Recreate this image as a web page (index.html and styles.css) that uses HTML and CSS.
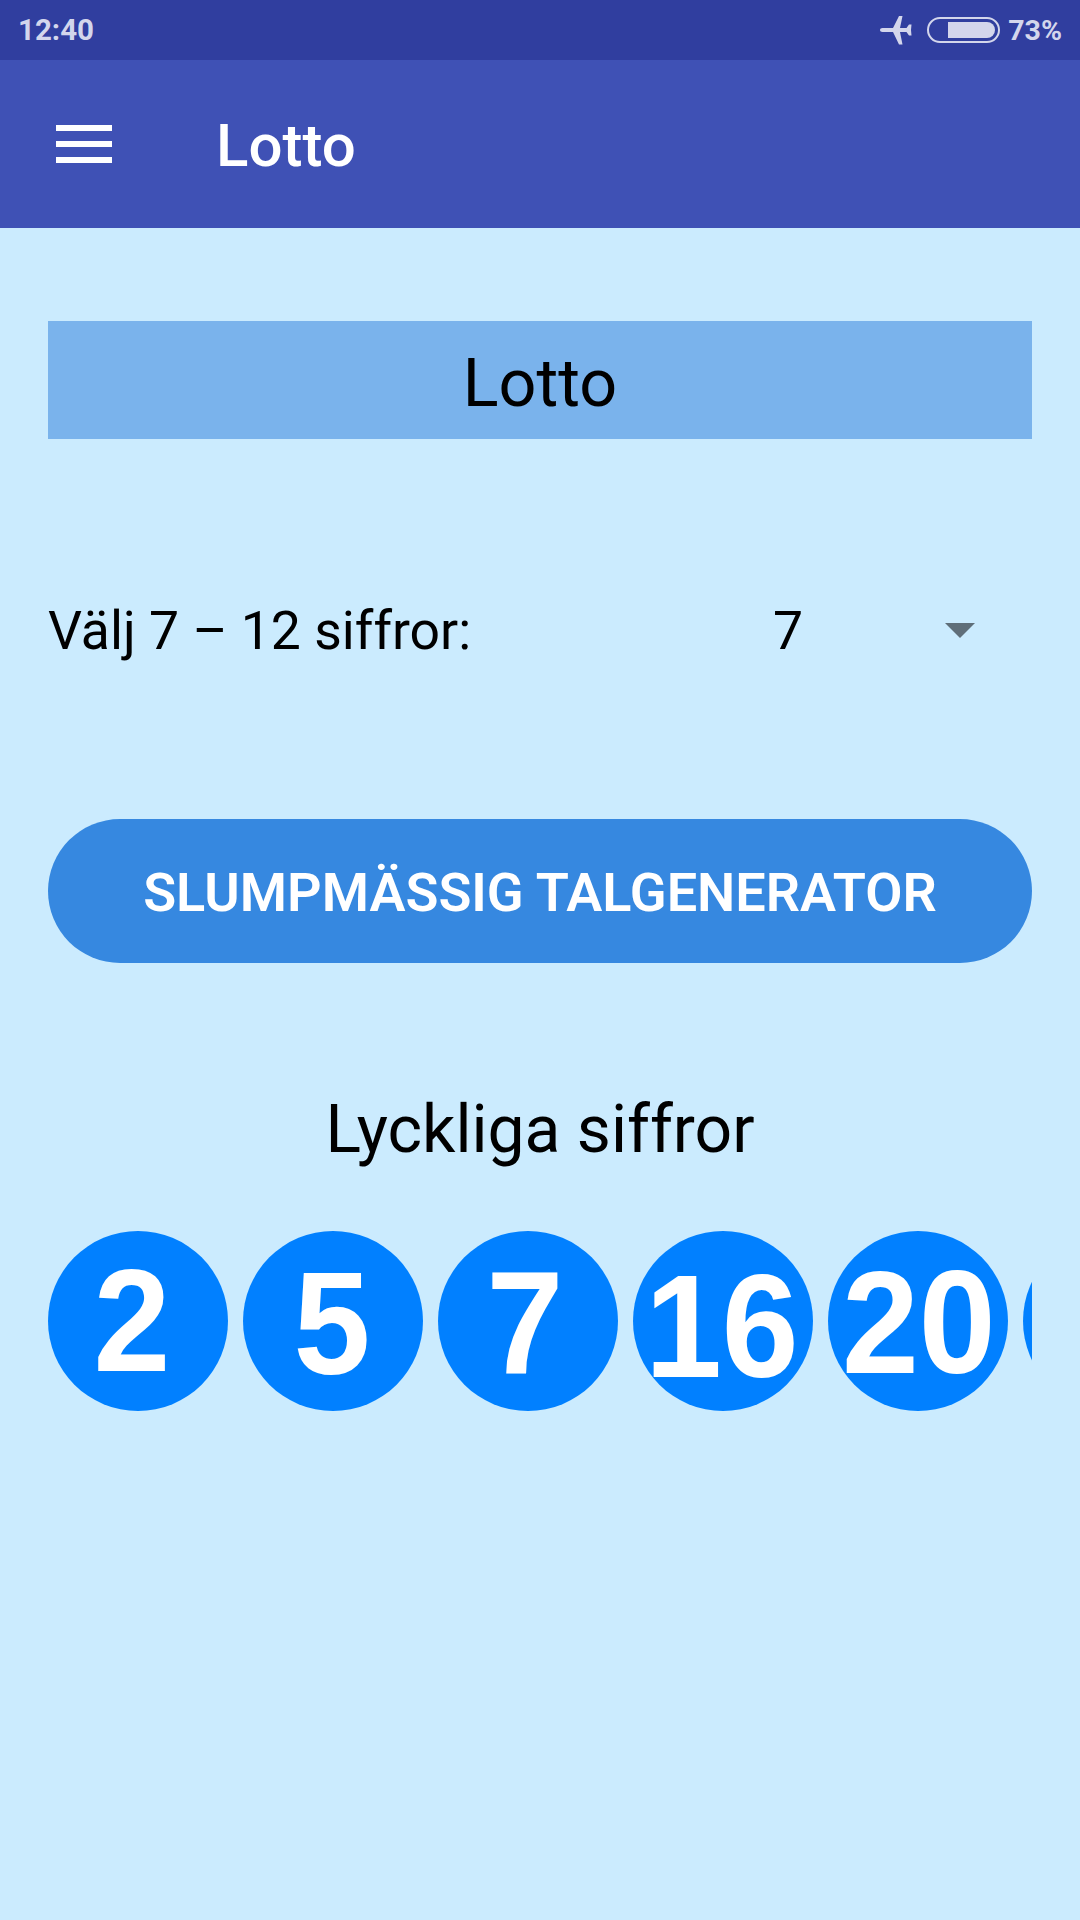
FILE: index.html
```html
<!DOCTYPE html>
<html lang="sv">
<head>
    <meta charset="UTF-8">
    <meta name="viewport" content="width=device-width, initial-scale=1.0">
    <title>Lotto</title>
    <link rel="stylesheet" href="styles.css">
</head>
<body>
    <div class="status-bar">
        <span class="status-text">12:40</span>
        <div class="status-icons">
            <svg class="plane" width="34" height="30" viewBox="0 0 34 30">
                <path d="M1 15c0-1.300 1-2 2.500-2H14L20 1h3.500L21 13h6.500l2.500-3.500h2.500L32 15l.5 5.500H30L27.500 17H21l2.500 12.500H20L14 17H3.500C2 17 1 16.300 1 15z"/>
            </svg>
            <div class="battery">
                <div class="battery-fill"></div>
            </div>
            <span class="status-text status-percent">73%</span>
        </div>
    </div>

    <div class="toolbar">
        <div class="menu-icon">
            <span></span>
            <span></span>
            <span></span>
        </div>
        <div class="toolbar-title">Lotto</div>
    </div>

    <div class="content">
        <h1 class="page-title">Lotto</h1>

        <div class="picker-row">
            <span class="picker-label">Välj 7 – 12 siffror:</span>
            <div class="picker">
                <span>7</span>
                <div class="picker-arrow"></div>
            </div>
        </div>

        <button type="button" class="generate-button">SLUMPMÄSSIG TALGENERATOR</button>

        <h2 class="lucky-title">Lyckliga siffror</h2>

        <div class="balls">
            <div class="ball ball-two"><span>2</span></div>
            <div class="ball ball-five"><span>5</span></div>
            <div class="ball ball-seven"><span>7</span></div>
            <div class="ball ball-sixteen"><span>16</span></div>
            <div class="ball ball-twenty"><span>20</span></div>
            <div class="ball"></div>
        </div>
    </div>
</body>
</html>
```

FILE: styles.css
```css
* {
    margin: 0;
    padding: 0;
    box-sizing: border-box;
}

body {
    width: 1080px;
    height: 1920px;
    overflow: hidden;
    font-family: Roboto, sans-serif;
    background-color: #cbebfe;
    color: #000;
}

.status-bar {
    height: 60px;
    padding: 0 18px 0 18px;
    display: flex;
    align-items: center;
    justify-content: space-between;
    background-color: #303e9f;
}

.status-text {
    font-size: 29.5px;
    font-weight: 700;
    color: #d3d6ec;
}

.status-percent {
    font-size: 28.5px;
}

.status-icons {
    display: flex;
    align-items: center;
}

.plane {
    fill: #d3d6ec;
    margin-right: 14px;
}

.battery {
    width: 73px;
    height: 26px;
    margin-right: 8px;
    padding: 3px;
    display: flex;
    justify-content: flex-end;
    border: 2px solid #d3d6ec;
    border-radius: 13px;
}

.battery-fill {
    width: 47px;
    background-color: #d3d6ec;
    border-radius: 0 9px 9px 0;
}

.toolbar {
    height: 168px;
    padding-left: 56px;
    display: flex;
    align-items: center;
    background-color: #3f51b5;
}

.menu-icon {
    width: 56px;
    margin-right: 104px;
    display: flex;
    flex-direction: column;
    gap: 10px;
}

.menu-icon span {
    height: 6px;
    background-color: #fff;
}

.toolbar-title {
    padding-top: 3px;
    font-size: 60px;
    font-weight: 500;
    color: #fff;
}

.content {
    padding: 93px 48px 0;
}

.page-title {
    height: 118px;
    line-height: 125px;
    text-align: center;
    font-size: 66.5px;
    font-weight: 400;
    background-color: #7ab3ec;
}

.picker-row {
    height: 64px;
    margin-top: 159px;
    display: flex;
    align-items: center;
    font-size: 53.5px;
}

.picker-label {
    width: 725px;
}

.picker {
    flex: 1;
    display: flex;
    align-items: center;
    justify-content: space-between;
    padding-right: 57px;
}

.picker-arrow {
    border-left: 15px solid transparent;
    border-right: 15px solid transparent;
    border-top: 15px solid #5f6e79;
}

.generate-button {
    display: block;
    width: 100%;
    height: 144px;
    margin-top: 157px;
    padding-top: 3px;
    border: none;
    border-radius: 72px;
    font-family: Roboto, sans-serif;
    font-size: 54px;
    font-weight: 600;
    color: #fff;
    background-color: #3688e0;
}

.lucky-title {
    margin-top: 127px;
    text-align: center;
    font-size: 66px;
    line-height: 80px;
    font-weight: 400;
}

.balls {
    margin-top: 61px;
    display: flex;
    gap: 15px;
    overflow: hidden;
}

.ball {
    flex: none;
    width: 180px;
    height: 180px;
    display: flex;
    align-items: center;
    justify-content: center;
    border-radius: 50%;
    font-family: "Liberation Sans", Arial, sans-serif;
    font-size: 147px;
    font-weight: 700;
    color: #fff;
    background-color: #0180ff;
}

.ball span {
    display: block;
    transform: scaleX(0.94);
}

.ball-two {
    padding: 0 12px 2px 0;
}

.ball-five {
    padding: 5px 2px 0 0;
}

.ball-seven {
    padding: 3px 6px 0 0;
}

.ball-sixteen {
    padding: 11px 2px 0 0;
}

.ball-twenty {
    padding: 2px 0 0 2px;
}
```
